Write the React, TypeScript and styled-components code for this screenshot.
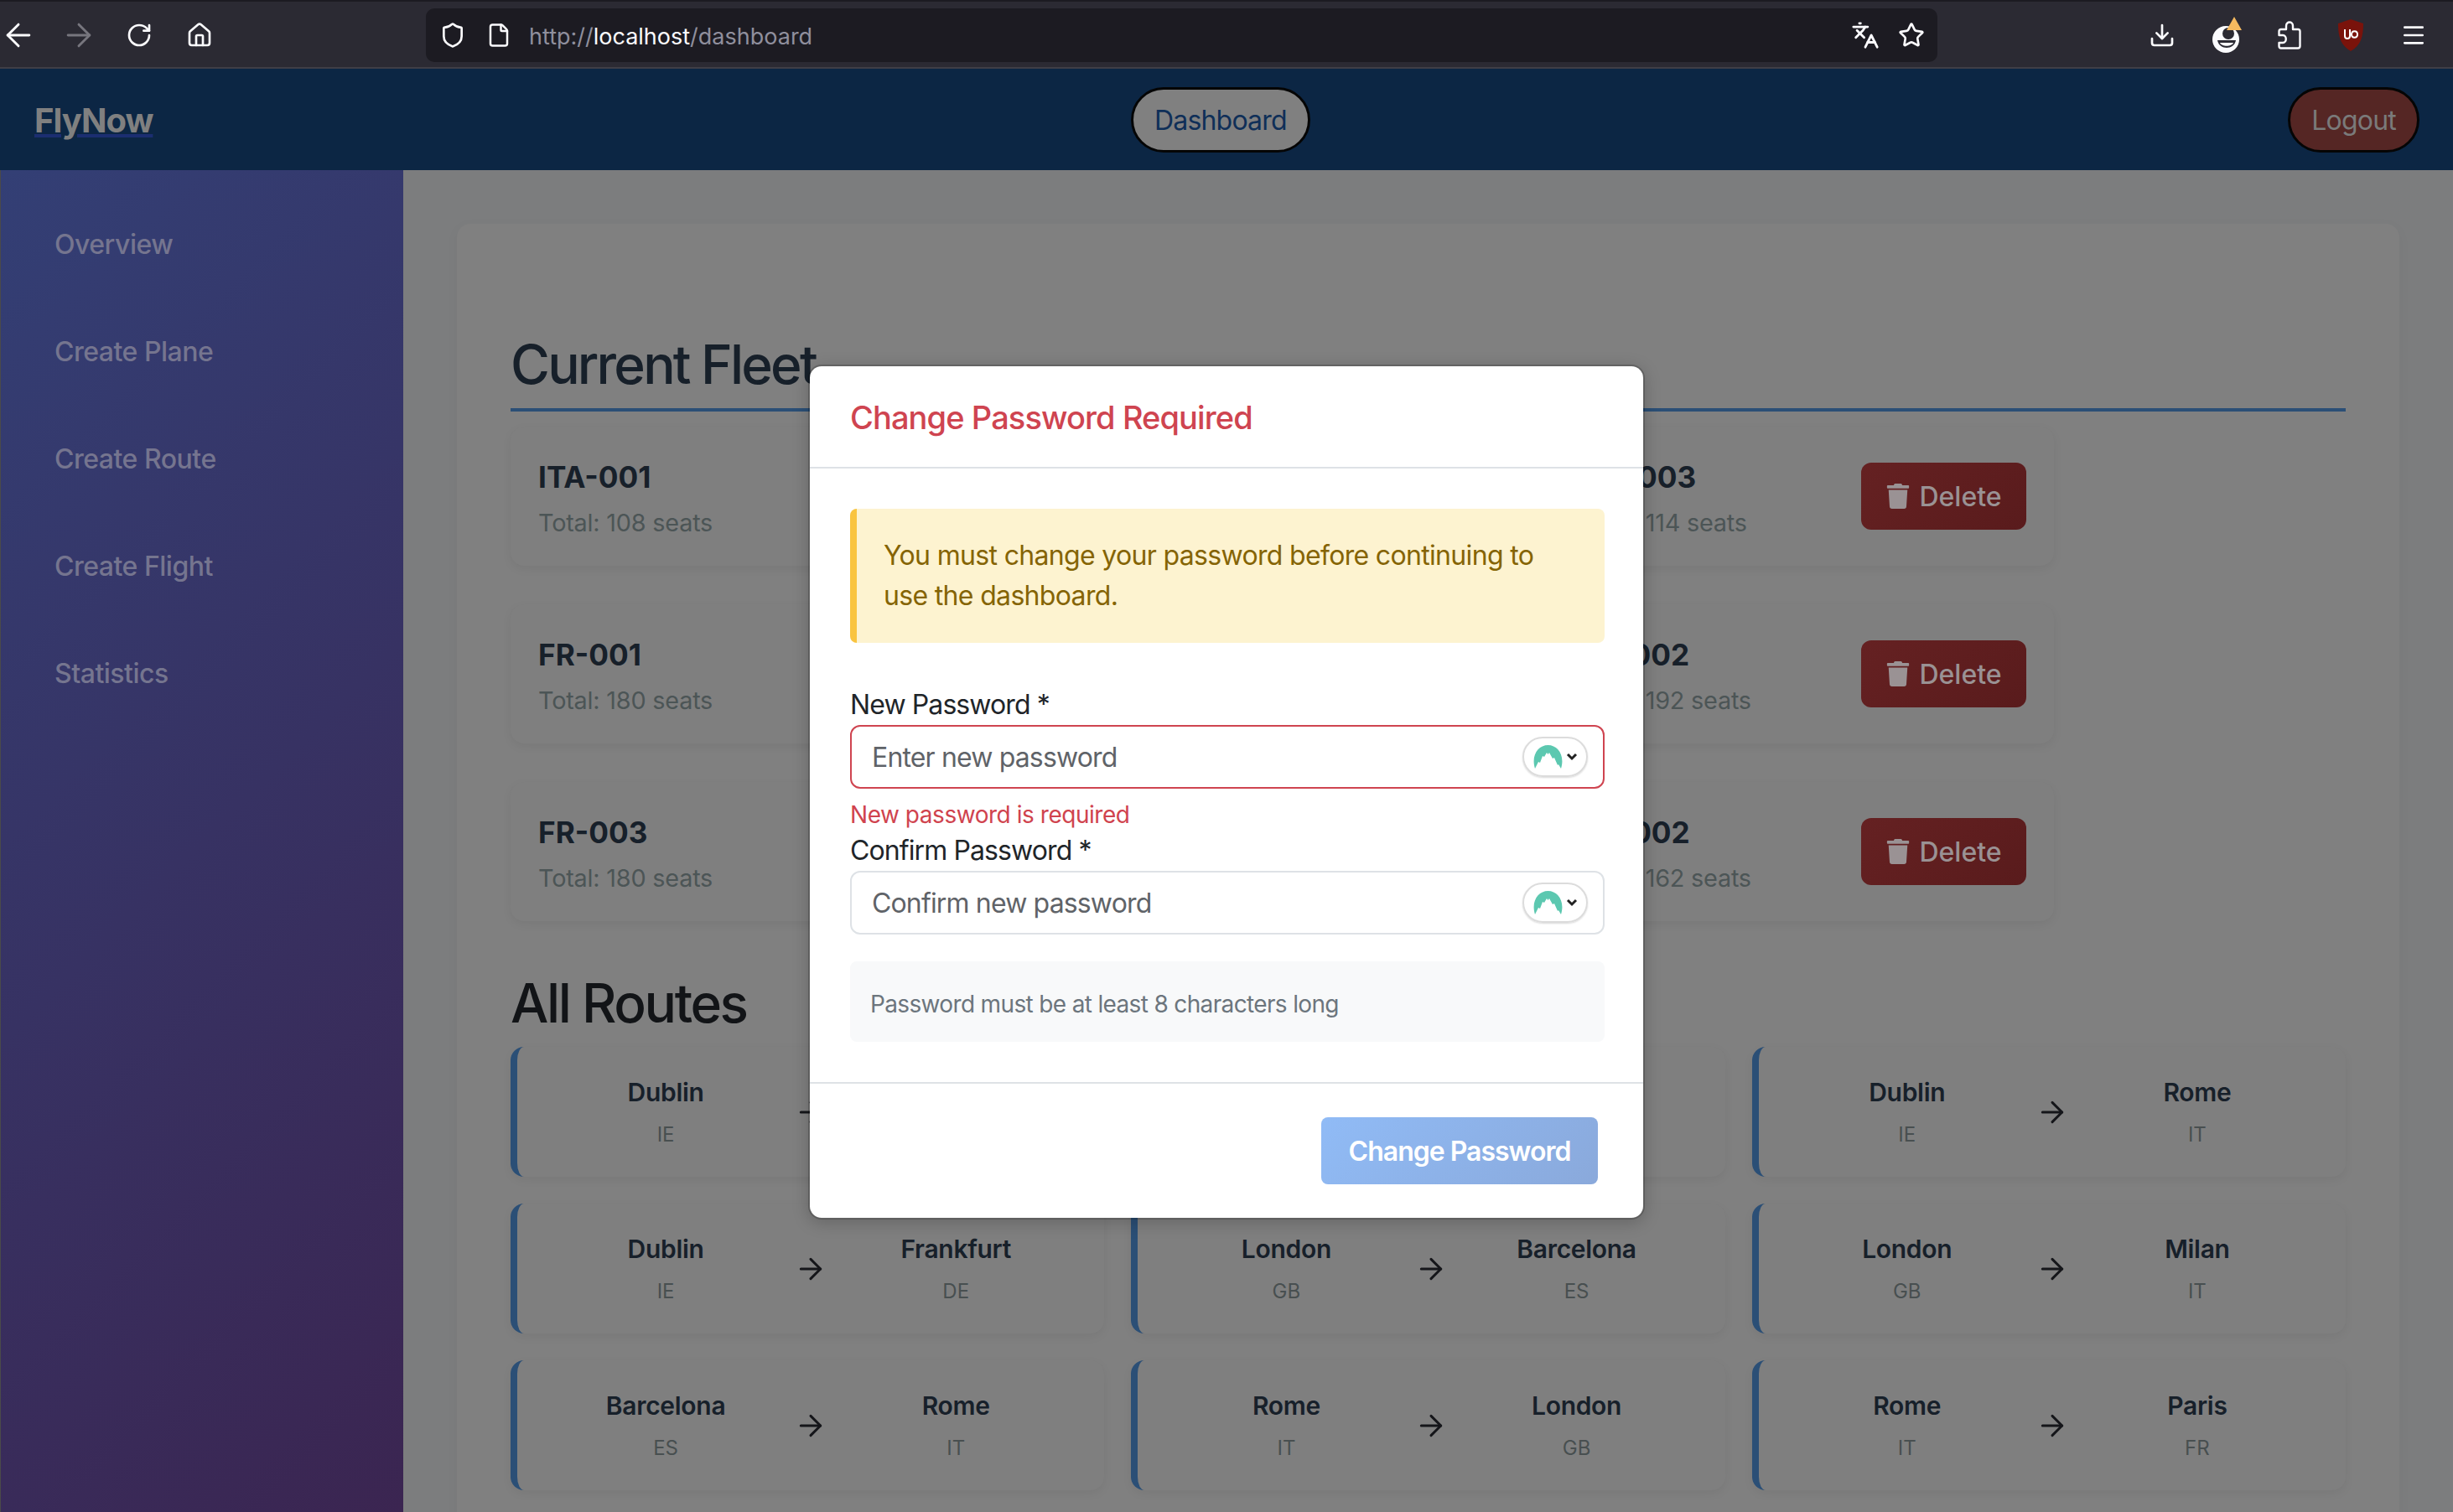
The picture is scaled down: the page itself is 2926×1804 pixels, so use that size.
import React from 'react';
import styled, { createGlobalStyle } from 'styled-components';
import { ArrowLeft, ArrowRight, RotateCw, House, Shield, File, Languages, Star, Download, Menu } from 'lucide-react';
import { FaTrash } from 'react-icons/fa';

const GlobalStyle = createGlobalStyle`
  html, body {
    margin: 0;
    padding: 0;
    background: #7c7d7e;
    font-family: Inter, "Liberation Sans", sans-serif;
  }
  * { box-sizing: border-box; }
`;

const Page = styled.div`
  position: relative;
  width: 2926px;
  height: 1804px;
  overflow: hidden;
  display: flex;
  flex-direction: column;
`;

const BrowserBar = styled.div`
  height: 82px;
  flex: none;
  display: flex;
  align-items: center;
  padding-top: 2px;
  background: #2b2a33;
  border-top: 2px solid #1c1b22;
  border-bottom: 2px solid #3f3e46;
  color: #fbfbfe;
`;

const NavButtons = styled.div`
  width: 508px;
  flex: none;
  display: flex;
  align-items: center;
  margin-left: -14px;
  padding-right: 14px;
`;

const NavCell = styled.div`
  width: 72px;
  display: flex;
  justify-content: center;
`;

const UrlBar = styled.div`
  width: 1803px;
  height: 64px;
  flex: none;
  display: flex;
  align-items: center;
  margin-left: 14px;
  background: #1c1b22;
  border-radius: 10px;
  padding: 0 15px 0 16px;
`;

const UrlFile = styled(File)`
  margin-left: 24px;
`;

const UrlText = styled.div`
  flex: 1;
  margin-left: 21px;
  padding-top: 2px;
  font-size: 27px;
  color: #8f8f9d;
  span { color: #fbfbfe; }
`;

const UrlIcons = styled.div`
  display: flex;
  align-items: center;
  gap: 22px;
`;

const Extensions = styled.div`
  flex: 1;
  display: flex;
  align-items: center;
  justify-content: flex-end;
  gap: 43px;
  padding-right: 31px;
`;

const NavBar = styled.header`
  height: 121px;
  flex: none;
  display: flex;
  justify-content: space-between;
  align-items: center;
  padding: 0 40px;
  background: #0c2644;
`;

const Brand = styled.a`
  margin-left: 1px;
  padding-top: 2px;
  font-size: 40px;
  font-weight: 700;
  color: #808080;
  text-decoration: underline;
  text-decoration-color: #1b2e70;
  letter-spacing: -1px;
`;

const PillButton = styled.div<{ $danger?: boolean }>`
  height: 78px;
  display: flex;
  align-items: center;
  padding: 2px 25px 0;
  border: 3px solid #050505;
  border-radius: 39px;
  font-size: 32px;
  letter-spacing: -0.8px;
  background: ${(p) => (p.$danger ? '#552624' : '#808080')};
  color: ${(p) => (p.$danger ? '#7a7a7a' : '#0f2f58')};
`;

const Body = styled.div`
  flex: 1;
  min-height: 0;
  display: flex;
`;

const Sidebar = styled.nav`
  width: 481px;
  flex: none;
  padding: 24px 0 0 65px;
  background: linear-gradient(135deg, #333f75, #3b2551);
  box-shadow: inset 1px 0 #4a4a4a;
`;

const SideItem = styled.div`
  height: 128px;
  display: flex;
  align-items: center;
  font-size: 32px;
  font-weight: 500;
  letter-spacing: -0.5px;
  color: #75758f;
`;

const Main = styled.main`
  flex: 1;
  padding: 64px;
`;

const Panel = styled.section`
  background: #808080;
  border-radius: 16px;
  padding: 132px 64px 64px;
  box-shadow: 0 4px 16px rgba(0, 0, 0, 0.04);
`;

const FleetTitle = styled.h2`
  margin: 0 0 18px;
  padding-bottom: 16px;
  border-bottom: 4px solid #2b4f76;
  font-size: 64px;
  line-height: 72px;
  font-weight: 500;
  letter-spacing: -2.8px;
  color: #17202a;
`;

const FleetGrid = styled.div`
  width: 1841px;
  display: grid;
  grid-template-columns: repeat(3, 1fr);
  gap: 46px 18px;
  margin-bottom: 62px;
`;

const FleetCard = styled.div`
  height: 166px;
  display: flex;
  align-items: center;
  justify-content: space-between;
  padding: 0 33px;
  background: #7f7f7f;
  border-radius: 16px;
  box-shadow: 0 4px 12px rgba(0, 0, 0, 0.06);
`;

const FleetInfo = styled.div`
  padding-top: 4px;
`;

const FleetName = styled.div`
  font-size: 35.2px;
  font-weight: 700;
  color: #17202a;
  margin-bottom: 16px;
`;

const FleetSeats = styled.div`
  font-size: 28.8px;
  letter-spacing: -0.2px;
  color: #4c5556;
`;

const DeleteButton = styled.div`
  width: 197px;
  height: 80px;
  flex: none;
  display: flex;
  align-items: center;
  justify-content: center;
  gap: 10px;
  border-radius: 12px;
  background: linear-gradient(135deg, #652122, #591b1c);
  font-size: 32px;
  font-weight: 500;
  color: #9a9294;
`;

const RoutesTitle = styled.h2`
  margin: 0 0 16px;
  font-size: 64px;
  line-height: 72px;
  font-weight: 500;
  letter-spacing: -2.4px;
  color: #121417;
`;

const RouteGrid = styled.div`
  display: grid;
  grid-template-columns: repeat(3, 1fr);
  gap: 32px;
`;

const RouteCard = styled.div`
  height: 155px;
  display: grid;
  grid-template-columns: 1fr 40px 1fr;
  gap: 8px;
  align-items: center;
  padding: 0 32px;
  background: #7f7f7f;
  border-left: 8px solid #2b4f76;
  border-radius: 16px;
  box-shadow: 0 4px 12px rgba(0, 0, 0, 0.06);
  color: #15161a;
`;

const RouteEnd = styled.div`
  text-align: center;
`;

const City = styled.div`
  font-size: 30px;
  font-weight: 600;
  letter-spacing: -0.3px;
  color: #17202a;
  margin-bottom: 18px;
`;

const Country = styled.div`
  font-size: 24px;
  color: #484f50;
`;

const ModalLayer = styled.div`
  position: absolute;
  inset: 82px 0 0;
  display: flex;
  align-items: center;
  justify-content: center;
`;

const Modal = styled.div`
  width: 998px;
  margin-top: 4px;
  background: #fff;
  border: 2px solid rgba(0, 0, 0, 0.2);
  background-clip: padding-box;
  border-radius: 16px;
  box-shadow: 0 4px 20px rgba(0, 0, 0, 0.2);
`;

const ModalHeader = styled.div`
  height: 122px;
  display: flex;
  align-items: center;
  padding: 2px 48px 0;
  border-bottom: 2px solid #dee2e6;
`;

const ModalTitle = styled.h5`
  margin: 0;
  font-size: 38px;
  font-weight: 500;
  letter-spacing: -0.9px;
  color: #cf4450;
`;

const ModalBody = styled.div`
  padding: 48px 46px 48px 48px;
  border-bottom: 2px solid #dee2e6;
`;

const Alert = styled.div`
  padding: 32px;
  margin-bottom: 54px;
  background: #fdf3d0;
  border-left: 8px solid #f9c440;
  border-radius: 8px;
  font-size: 32px;
  line-height: 48px;
  letter-spacing: -0.67px;
  color: #856404;
`;

const Label = styled.label`
  display: block;
  font-size: 32px;
  line-height: 40px;
  letter-spacing: -0.9px;
  color: #212529;
  margin-bottom: 4px;
`;

const InputBox = styled.div<{ $invalid?: boolean }>`
  height: 76px;
  display: flex;
  align-items: center;
  justify-content: space-between;
  padding: 0 18px 0 24px;
  border: 2px solid ${(p) => (p.$invalid ? '#cf4450' : '#dee2e6')};
  border-radius: 12px;
  font-size: 32px;
  letter-spacing: -0.85px;
  color: #5f6368;
`;

const VpnBadge = styled.div`
  width: 78px;
  height: 48px;
  display: flex;
  align-items: center;
  justify-content: center;
  gap: 4px;
  border: 2px solid #dcdcdc;
  border-radius: 24px;
  box-shadow: 0 1px 2px rgba(0, 0, 0, 0.15);
`;

const ErrorText = styled.div`
  margin: 14px 0 6px;
  font-size: 28px;
  line-height: 34px;
  letter-spacing: -0.46px;
  color: #d0434e;
`;

const Hint = styled.div`
  height: 96px;
  display: flex;
  align-items: center;
  margin-top: 32px;
  padding: 6px 24px 0;
  background: #f8f9fa;
  border-radius: 8px;
  font-size: 28px;
  letter-spacing: -0.65px;
  color: #6c757d;
`;

const ModalFooter = styled.div`
  display: flex;
  justify-content: flex-end;
  padding: 40px 54px 40px;
`;

const SubmitButton = styled.div`
  width: 330px;
  height: 80px;
  display: flex;
  align-items: center;
  justify-content: center;
  border-radius: 8px;
  background: linear-gradient(135deg, #90bbf6, #8aa9db);
  font-size: 32px;
  font-weight: 600;
  letter-spacing: -1px;
  color: #fff;
`;

const fleet = [
  { name: 'ITA-001', seats: 108 },
  { name: 'ITA-002', seats: 120 },
  { name: 'ITA-003', seats: 114 },
  { name: 'FR-001', seats: 180 },
  { name: 'FR-002', seats: 180 },
  { name: 'GE-002', seats: 192 },
  { name: 'FR-003', seats: 180 },
  { name: 'IE-001', seats: 186 },
  { name: 'UK-002', seats: 162 },
];

const routes = [
  ['Dublin', 'IE', 'London', 'GB'],
  ['London', 'GB', 'Dublin', 'IE'],
  ['Dublin', 'IE', 'Rome', 'IT'],
  ['Dublin', 'IE', 'Frankfurt', 'DE'],
  ['London', 'GB', 'Barcelona', 'ES'],
  ['London', 'GB', 'Milan', 'IT'],
  ['Barcelona', 'ES', 'Rome', 'IT'],
  ['Rome', 'IT', 'London', 'GB'],
  ['Rome', 'IT', 'Paris', 'FR'],
];

const sideItems = ['Overview', 'Create Plane', 'Create Route', 'Create Flight', 'Statistics'];

const VpnIcon: React.FC = () => (
  <VpnBadge>
    <svg width="35" height="28" viewBox="0 0 35 28">
      <path d="M2 28 C-3 12 6 0 17.5 0 C29 0 38 12 33 28 L30 23 L29 24 L25 15 L23 16 L19 9 L17.5 11 L16 9 L13 14 L11 13 L8 21 L6 20 Z" fill="#5cc8b0" />
    </svg>
    <svg width="14" height="10" viewBox="0 0 14 10">
      <path d="M2 2 L7 7 L12 2" fill="none" stroke="#222" strokeWidth="3" />
    </svg>
  </VpnBadge>
);

const UblockIcon: React.FC = () => (
  <svg width="32" height="40" viewBox="0 0 32 40">
    <path d="M16 1 L31 6 C31 22 28 32 16 39 C4 32 1 22 1 6 Z" fill="#7a130b" />
    <path d="M9 13 V21 C9 25 15 25 15 21 V13 M17 19 C17 14 24 14 24 19 C24 24 17 24 17 19" fill="none" stroke="#fff" strokeWidth="2" />
  </svg>
);

const SyncIcon: React.FC = () => (
  <svg width="36" height="44" viewBox="0 0 36 44">
    <ellipse cx="17" cy="27" rx="16" ry="16" fill="#fbfbfe" />
    <circle cx="20" cy="20" r="7" fill="#2b2a33" />
    <path d="M7 28 H29 C28 34 23 37 18 37 C13 37 8 34 7 28 Z" fill="#2b2a33" />
    <path d="M10 31 H26 C24 36 12 36 10 31 Z" fill="#fbfbfe" />
    <path d="M27 0 L36 16 H18 Z" fill="#f5b95f" />
  </svg>
);

const PuzzleIcon: React.FC = () => (
  <svg width="28" height="34" viewBox="0 0 28 34" fill="none" stroke="#fbfbfe" strokeWidth="2.4" strokeLinejoin="round">
    <path d="M4 10 H10 V6 C10 0 18 0 18 6 V10 H24 C25.5 10 26.5 11 26.5 12.5 V30 C26.5 31.5 25.5 32.5 24 32.5 H4 C2.5 32.5 1.5 31.5 1.5 30 V26 H6 C11 26 11 17 6 17 H1.5 V12.5 C1.5 11 2.5 10 4 10 Z" />
  </svg>
);

const App: React.FC = () => {
  return (
    <Page>
      <GlobalStyle />
      <BrowserBar>
        <NavButtons>
          <NavCell>
            <ArrowLeft size={44} strokeWidth={1.6} />
          </NavCell>
          <NavCell>
            <ArrowRight size={44} strokeWidth={1.6} color="#77767e" />
          </NavCell>
          <NavCell>
            <RotateCw size={32} strokeWidth={2} />
          </NavCell>
          <NavCell>
            <House size={32} strokeWidth={2} />
          </NavCell>
        </NavButtons>
        <UrlBar>
          <Shield size={32} strokeWidth={2} />
          <UrlFile size={30} strokeWidth={2} />
          <UrlText>
            http://<span>localhost</span>/dashboard
          </UrlText>
          <UrlIcons>
            <Languages size={34} strokeWidth={2} />
            <Star size={32} strokeWidth={2} />
          </UrlIcons>
        </UrlBar>
        <Extensions>
          <Download size={32} strokeWidth={2} />
          <SyncIcon />
          <PuzzleIcon />
          <UblockIcon />
          <Menu size={32} strokeWidth={2} />
        </Extensions>
      </BrowserBar>

      <NavBar>
        <Brand>FlyNow</Brand>
        <PillButton>Dashboard</PillButton>
        <PillButton $danger>Logout</PillButton>
      </NavBar>

      <Body>
        <Sidebar>
          {sideItems.map((item) => (
            <SideItem key={item}>{item}</SideItem>
          ))}
        </Sidebar>
        <Main>
          <Panel>
            <FleetTitle>Current Fleet</FleetTitle>
            <FleetGrid>
              {fleet.map((plane) => (
                <FleetCard key={plane.name}>
                  <FleetInfo>
                    <FleetName>{plane.name}</FleetName>
                    <FleetSeats>Total: {plane.seats} seats</FleetSeats>
                  </FleetInfo>
                  <DeleteButton>
                    <FaTrash size={30} />
                    Delete
                  </DeleteButton>
                </FleetCard>
              ))}
            </FleetGrid>
            <RoutesTitle>All Routes</RoutesTitle>
            <RouteGrid>
              {routes.map(([from, fromCode, to, toCode], index) => (
                <RouteCard key={index}>
                  <RouteEnd>
                    <City>{from}</City>
                    <Country>{fromCode}</Country>
                  </RouteEnd>
                  <ArrowRight size={40} strokeWidth={1.8} />
                  <RouteEnd>
                    <City>{to}</City>
                    <Country>{toCode}</Country>
                  </RouteEnd>
                </RouteCard>
              ))}
            </RouteGrid>
          </Panel>
        </Main>
      </Body>

      <ModalLayer>
        <Modal>
          <ModalHeader>
            <ModalTitle>Change Password Required</ModalTitle>
          </ModalHeader>
          <ModalBody>
            <Alert>You must change your password before continuing to use the dashboard.</Alert>
            <Label>New Password *</Label>
            <InputBox $invalid>
              Enter new password
              <VpnIcon />
            </InputBox>
            <ErrorText>New password is required</ErrorText>
            <Label>Confirm Password *</Label>
            <InputBox>
              Confirm new password
              <VpnIcon />
            </InputBox>
            <Hint>Password must be at least 8 characters long</Hint>
          </ModalBody>
          <ModalFooter>
            <SubmitButton>Change Password</SubmitButton>
          </ModalFooter>
        </Modal>
      </ModalLayer>
    </Page>
  );
};

export default App;
